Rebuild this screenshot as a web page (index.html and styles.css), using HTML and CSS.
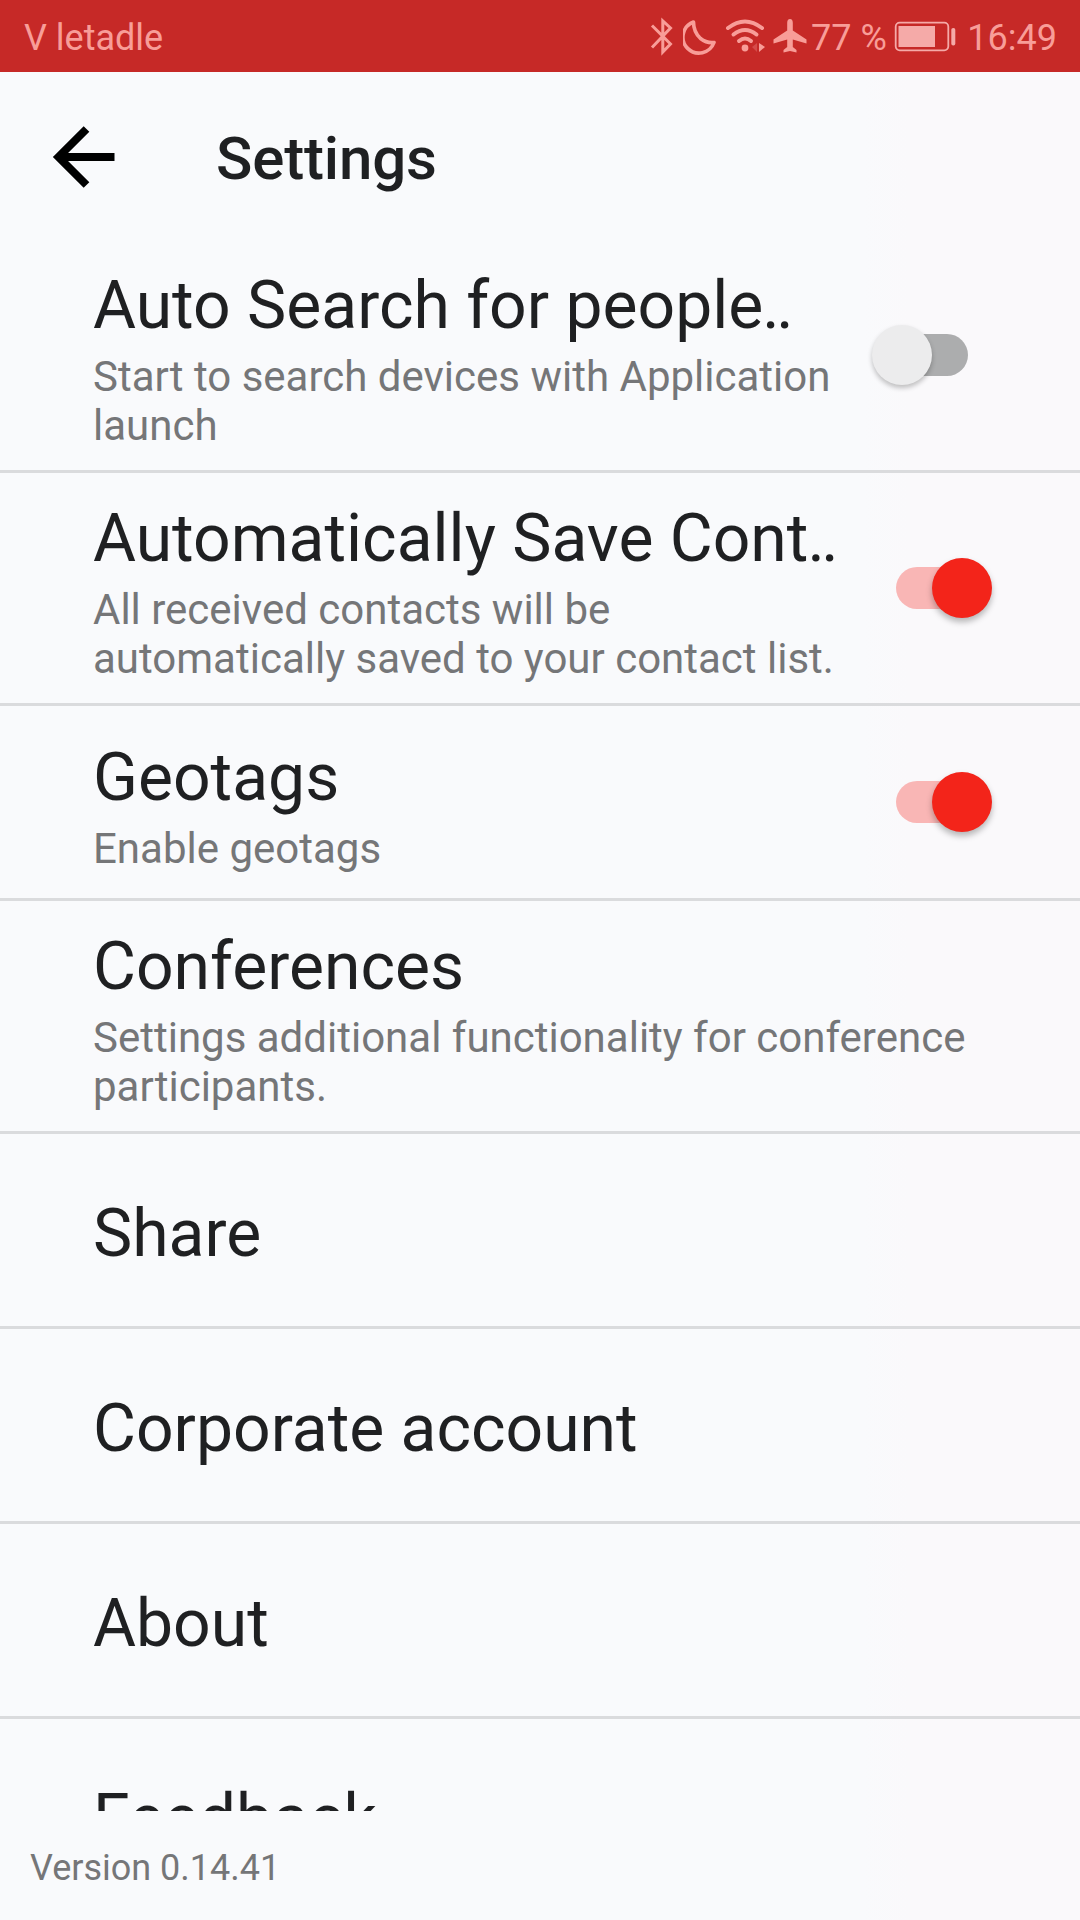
FILE: index.html
```html
<!DOCTYPE html>
<html lang="en">

<head>
    <meta charset="UTF-8">
    <meta name="viewport" content="width=device-width, initial-scale=1.0">
    <title>Settings</title>
    <link rel="stylesheet" href="styles.css">
</head>

<body>
    <div class="status-bar">
        <span class="status-network">V letadle</span>
        <div class="status-icons">
            <!-- bluetooth -->
            <svg class="icon-bluetooth" width="24" height="40" viewBox="0 0 24 40">
                <path d="M3 9.5L21.5 28L13.8 36V5L21.5 12L3 31.5" fill="none" stroke="currentColor" stroke-width="3" />
            </svg>
            <!-- do not disturb -->
            <svg class="icon-moon" width="34" height="40" viewBox="0 0 34 40">
                <path d="M10.5 6A16 16 0 1 0 31 26.5Q24 27.5 17.5 22.5Q10.5 16 10.5 6Z" fill="none" stroke="currentColor" stroke-width="3.6" stroke-linejoin="round" />
            </svg>
            <!-- wifi -->
            <svg class="icon-wifi" width="40" height="40" viewBox="0 0 40 40">
                <g fill="none" stroke="currentColor" stroke-width="4" stroke-linecap="round">
                    <path d="M3 12Q20 -1 37 12" />
                    <path d="M8.5 18.5Q20 9.5 31.5 18.5" />
                    <path d="M14 25Q20 20 26 25" />
                </g>
                <circle cx="20" cy="32" r="3.4" fill="currentColor" />
                <path d="M34 27L40 31L34 36Z" fill="currentColor" />
                <path d="M32 27L27 31L32 36Z" fill="currentColor" opacity=".3" />
            </svg>
            <!-- airplane mode -->
            <svg class="icon-plane" width="36" height="40" viewBox="0 0 36 40">
                <path d="M18 3Q20.8 3 20.8 7V14.5L34.5 23.5V27.5L20.8 23.5V31L24.5 34V36.5L18 35L11.5 36.5V34L15.2 31V23.5L1.5 27.5V23.5L15.2 14.5V7Q15.2 3 18 3Z" fill="currentColor" />
            </svg>
            <span class="battery-level">77 %</span>
            <svg class="icon-battery" width="62" height="40" viewBox="0 0 62 40">
                <rect x="1.7" y="6.7" width="52.6" height="27.6" rx="4" fill="none" stroke="currentColor" stroke-width="1.8" />
                <rect x="4.5" y="10" width="36.5" height="21" fill="currentColor" />
                <rect x="57.3" y="12" width="4" height="17.5" rx="1.8" fill="currentColor" />
            </svg>
            <span class="clock">16:49</span>
        </div>
    </div>

    <div class="toolbar">
        <svg class="icon-back" width="64" height="64" viewBox="0 0 64 64">
            <path d="M62.5 32H8M34.5 4L6.5 32L34.5 60" fill="none" stroke="currentColor" stroke-width="8" />
        </svg>
        <h1 class="toolbar-title">Settings</h1>
    </div>

    <div class="settings-list">
        <div class="setting">
            <div class="setting-text">
                <div class="setting-title">Auto Search for people<span class="dots">..</span></div>
                <div class="setting-desc">Start to search devices with Application launch</div>
            </div>
            <div class="switch switch-off"></div>
        </div>
        <div class="setting">
            <div class="setting-text">
                <div class="setting-title">Automatically Save Cont<span class="dots">..</span></div>
                <div class="setting-desc">All received contacts will be automatically saved to your contact list.</div>
            </div>
            <div class="switch switch-on"></div>
        </div>
        <div class="setting">
            <div class="setting-text">
                <div class="setting-title">Geotags</div>
                <div class="setting-desc">Enable geotags</div>
            </div>
            <div class="switch switch-on"></div>
        </div>
        <div class="setting">
            <div class="setting-text">
                <div class="setting-title">Conferences</div>
                <div class="setting-desc">Settings additional functionality for conference participants.</div>
            </div>
        </div>
        <div class="setting">
            <div class="setting-title">Share</div>
        </div>
        <div class="setting">
            <div class="setting-title">Corporate account</div>
        </div>
        <div class="setting">
            <div class="setting-title">About</div>
        </div>
        <div class="setting">
            <div class="setting-title">Feedback</div>
        </div>
    </div>

    <div class="version">Version 0.14.41</div>
</body>

</html>
```
FILE: styles.css
```css
* {
    box-sizing: border-box;
}

body {
    display: flex;
    flex-direction: column;
    width: 1080px;
    height: 1920px;
    margin: 0;
    overflow: hidden;
    background: linear-gradient(to right, #f9fafc 80%, #faf9fb 84%);
    color: #1f2022;
    font-family: Roboto, "Liberation Sans", sans-serif;
}

/* status bar */

.status-bar {
    display: flex;
    flex-shrink: 0;
    align-items: center;
    height: 72px;
    padding: 0 23px 0 24px;
    background: #c62927;
    color: #f89d98;
    font-size: 36px;
    line-height: 42px;
    white-space: nowrap;
}

.status-network {
    padding-top: 4px;
}

.status-icons {
    display: flex;
    align-items: center;
    width: 408px;
    margin-left: auto;
}

.status-icons svg {
    flex-shrink: 0;
}

.icon-moon {
    margin-left: 10px;
}

.icon-wifi {
    margin-left: 8px;
}

.icon-plane {
    margin-left: 7px;
}

.battery-level {
    width: 84px;
    margin-left: 3px;
    padding-top: 4px;
}

.clock {
    margin-left: 11px;
    padding-top: 4px;
}

.icon-battery {
    color: #f5aaa8;
}

/* toolbar */

.toolbar {
    display: flex;
    flex-shrink: 0;
    align-items: center;
    height: 168px;
    padding-left: 52px;
}

.icon-back {
    margin-top: 1px;
    color: #000;
}

.toolbar-title {
    margin: 6px 0 0 100px;
    font-size: 60px;
    font-weight: 500;
    line-height: 70px;
    letter-spacing: -.15px;
}

/* list */

.settings-list {
    height: 1571px;
    flex-shrink: 0;
    overflow: hidden;
}

.setting {
    display: flex;
    align-items: center;
    min-height: 195px;
    padding: 0 88px 0 93px;
    border-bottom: 3px solid #dadbdd;
}

.setting-text {
    flex: 1;
}

.setting-title,
.setting-text {
    padding: 27px 0 20px;
}

.setting-text .setting-title {
    padding: 0;
}

.setting-title {
    font-size: 66px;
    line-height: 77px;
    white-space: nowrap;
}

.dots {
    margin-left: -1px;
    letter-spacing: -3.5px;
}

.setting-desc {
    margin-top: 8px;
    color: #757678;
    font-size: 42px;
    line-height: 49px;
}

/* switches */

.switch {
    display: flex;
    flex-shrink: 0;
    align-items: center;
    width: 96px;
    height: 42px;
    margin-left: 35px;
    border-radius: 21px;
}

.switch::before {
    content: "";
    width: 60px;
    height: 60px;
    border-radius: 50%;
    box-shadow: 0 4px 6px rgba(0, 0, 0, .28);
}

.switch-off {
    margin-right: 24px;
    background: linear-gradient(to right, transparent 30px, #acadae 30px);
}

.switch-off::before {
    background: #ececed;
    box-shadow: 0 3px 5px rgba(0, 0, 0, .24);
}

.switch-on {
    justify-content: flex-end;
    background: linear-gradient(to left, transparent 30px, #f9b6b5 30px);
}

.switch-on::before {
    background: #f3241a;
}

/* footer */

.version {
    padding: 36px 30px 0;
    color: #757678;
    font-size: 36px;
    line-height: 42px;
}
```
